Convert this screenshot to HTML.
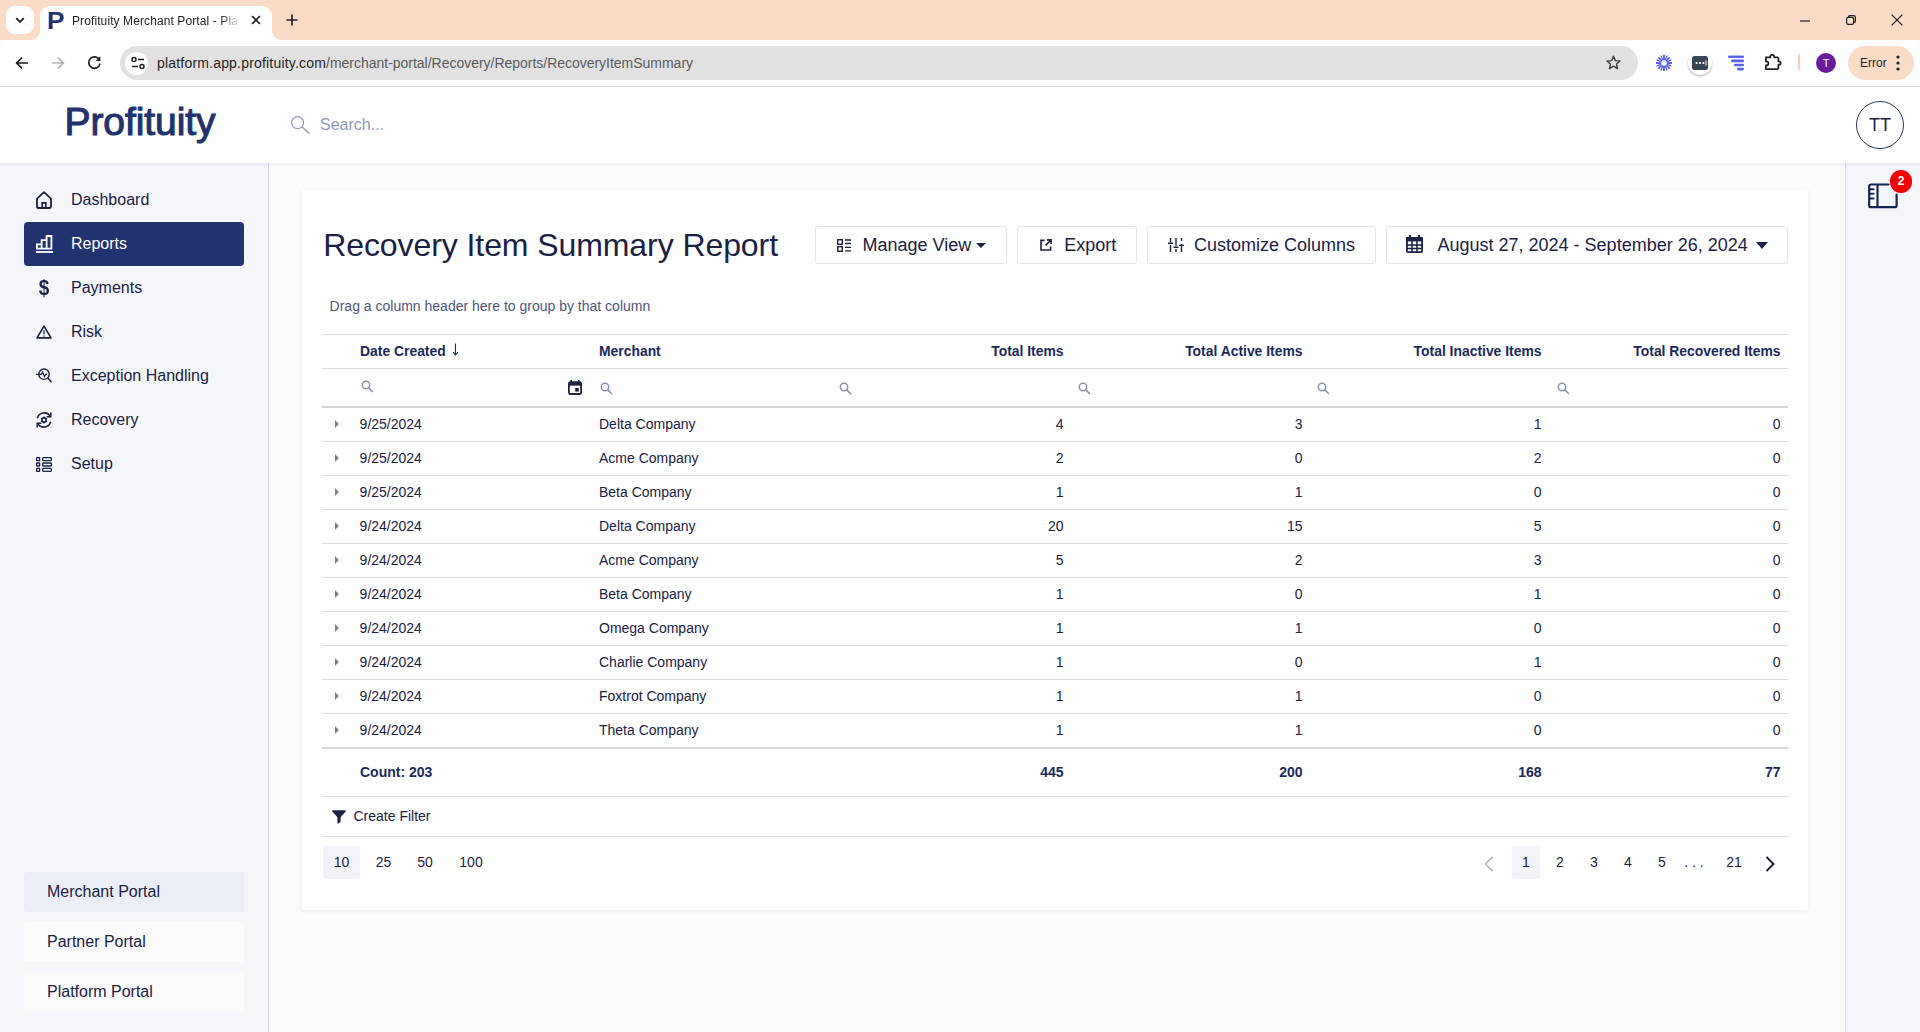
<!DOCTYPE html>
<html lang="en">
<head>
<meta charset="utf-8">
<title>Profituity Merchant Portal - Platform</title>
<style>
*{box-sizing:border-box;margin:0;padding:0}
html,body{width:1920px;height:1032px;overflow:hidden;background:#fbfbfc;font-family:"Liberation Sans",Arial,sans-serif;color:#1a2145}
.abs{position:absolute}
svg{display:block;overflow:visible}
/* ---------- browser chrome ---------- */
#tabbar{left:0;top:0;width:1920px;height:40px;background:#f9dbc8}
#tabdrop{left:6px;top:6px;width:28px;height:28px;border-radius:9px;background:#fff}
#tab{left:40px;top:6px;width:232px;height:34px;background:#fff;border-radius:10px 10px 0 0}
#tab:before,#tab:after{content:"";position:absolute;bottom:0;width:10px;height:10px}
#tab:before{left:-10px;background:radial-gradient(circle at 0 0,transparent 10px,#fff 10.5px)}
#tab:after{right:-10px;background:radial-gradient(circle at 100% 0,transparent 10px,#fff 10.5px)}
#tabtitle{left:72px;top:14px;font-size:12px;color:#1f1f1f;white-space:nowrap;width:168px;overflow:hidden;letter-spacing:.1px;-webkit-mask-image:linear-gradient(90deg,#000 148px,transparent 168px)}
#toolbar{left:0;top:40px;width:1920px;height:47px;background:#fff;border-bottom:1px solid #d9d9d9;border-radius:8px 8px 0 0}
#urlpill{left:120px;top:46px;width:1518px;height:34px;border-radius:17px;background:#e1e1e1}
#urlicon{left:125px;top:51.5px;width:23px;height:23px;border-radius:12px;background:#fff}
#url{left:157px;top:55px;font-size:14px;color:#1f1f1f;white-space:nowrap;letter-spacing:.19px}
#url span{color:#5a5a5a;letter-spacing:-.02px}
#errpill{left:1848px;top:46px;width:66px;height:34px;border-radius:17px;background:#f9dbc8}
#errtxt{left:1860px;top:56px;font-size:12px;color:#1f1f1f}
#avatar{left:1816px;top:53px;width:20px;height:20px;border-radius:10px;background:#6a1b9a;color:#fff;font-size:11px;text-align:center;line-height:20px}
#sepbar{left:1798px;top:54px;width:2px;height:16px;background:#f6cdb4;border-radius:1px}
/* ---------- app header ---------- */
#apphead{left:0;top:87px;width:1920px;height:76px;background:#fff;box-shadow:0 1px 4px rgba(40,50,100,.11)}
#logo{left:64.5px;top:99px;font-size:39px;font-weight:normal;letter-spacing:-.08px;color:#22326e;line-height:46px;-webkit-text-stroke:1.1px #22326e}
#search{left:320px;top:116px;font-size:16px;color:#8f97ba}
#tt{left:1856px;top:101px;width:48px;height:48px;border-radius:24px;border:1px solid #2a3364;font-size:18px;text-align:center;line-height:47px;color:#1a2145}
/* ---------- sidebar ---------- */
#side{left:0;top:163px;width:269px;height:869px;background:#f5f6fa;border-right:1px solid #d6daf0}
.nav{left:24px;width:220px;height:44px;border-radius:4px;font-size:16px;line-height:44px;padding-left:47px;color:#1a2145}
.nav.on{background:#21336f;color:#fff}
.portal{left:24px;width:220px;height:40px;border-radius:3px;font-size:16px;line-height:40px;padding-left:23px;background:#fbfbfc;color:#1a2145}
.portal.on{background:#eceef7}
#rside{left:1845px;top:163px;width:75px;height:869px;background:#f5f6fa;border-left:1px solid #d6daf0}
#badge{left:1890px;top:170px;width:22px;height:23px;border-radius:11px;background:#f20000;color:#fff;font-size:12px;font-weight:bold;text-align:center;line-height:23px}
/* ---------- card ---------- */
#card{left:302px;top:190px;width:1506px;height:720px;background:#fff;box-shadow:0 1px 4px rgba(40,50,100,.10)}
#title{left:323.2px;top:224px;font-size:32px;color:#1a2145;line-height:42px;white-space:nowrap;letter-spacing:-.08px}
.btn{top:226px;height:38px;border:1px solid #e2e4ee;border-radius:3px;background:#fff;font-size:18px;line-height:36px;color:#1a2145;white-space:nowrap}
.btn span{position:absolute;top:0}
#drag{left:329.6px;top:298px;font-size:14px;color:#4d5580}
.hl{left:322px;width:1466px;height:1px;background:#dedee0}
.hl2{left:322px;width:1466px;height:2px;background:#d5d5d7}
.th{top:344px;font-size:13.9px;font-weight:bold;color:#1a2a5e;white-space:nowrap;line-height:15px}
.r{text-align:right}
.td{font-size:14px;color:#1a2145;white-space:nowrap;line-height:16px}
.tf{top:764px;font-size:14px;font-weight:bold;color:#1a2a5e;white-space:nowrap;line-height:16px}
.exp{left:335px;width:0;height:0;border-left:4.6px solid #828390;border-top:4px solid transparent;border-bottom:4px solid transparent}
.pg{top:846px;height:32.6px;font-size:14px;line-height:32px;text-align:center;color:#1a2145;border-radius:3px}
.pg.on{background:#f3f4f9}
</style>
</head>
<body>
<!-- browser chrome -->
<div class="abs" id="tabbar"></div>
<div class="abs" id="tabdrop"><svg class="abs" style="left:9px;top:11px" width="10" height="7" viewBox="0 0 10 7"><path d="M1.2 1.2 L5 5 L8.8 1.2" fill="none" stroke="#1f1f1f" stroke-width="1.8"/></svg></div>
<div class="abs" id="toolbar"></div>
<div class="abs" id="tab"></div>
<div class="abs" style="left:47px;top:9px;font-size:23px;font-weight:bold;color:#22326e;line-height:24px;transform:scaleX(1.15);transform-origin:0 0">P</div>
<div class="abs" id="tabtitle">Profituity Merchant Portal - Platform</div>
<svg class="abs" style="left:251px;top:15px" width="10" height="10" viewBox="0 0 10 10"><path d="M1 1 L9 9 M9 1 L1 9" stroke="#1f1f1f" stroke-width="1.6" fill="none"/></svg>
<svg class="abs" style="left:286px;top:14px" width="12" height="12" viewBox="0 0 12 12"><path d="M6 0.5 V11.5 M0.5 6 H11.5" stroke="#1f1f1f" stroke-width="1.7" fill="none"/></svg>
<!-- window controls -->
<svg class="abs" style="left:1800px;top:19.5px" width="10" height="2" viewBox="0 0 10 2"><path d="M0 1 H10" stroke="#1f1f1f" stroke-width="1.2"/></svg>
<svg class="abs" style="left:1846px;top:15px" width="10" height="10" viewBox="0 0 10 10"><rect x="0.6" y="2.4" width="7" height="7" rx="1.6" fill="none" stroke="#1f1f1f" stroke-width="1.2"/><path d="M2.4 2.2 Q2.4 0.6 4 0.6 H7.6 Q9.4 0.6 9.4 2.4 V6 Q9.4 7.6 7.8 7.6" fill="none" stroke="#1f1f1f" stroke-width="1.2"/></svg>
<svg class="abs" style="left:1891px;top:14px" width="12" height="12" viewBox="0 0 12 12"><path d="M0.6 0.6 L11.4 11.4 M11.4 0.6 L0.6 11.4" stroke="#1f1f1f" stroke-width="1.3" fill="none"/></svg>
<!-- toolbar icons -->
<svg class="abs" style="left:15px;top:56px" width="14" height="14" viewBox="0 0 14 14"><path d="M13 7 H2 M7 1.6 L1.6 7 L7 12.4" fill="none" stroke="#1f1f1f" stroke-width="1.7"/></svg>
<svg class="abs" style="left:51px;top:56px" width="14" height="14" viewBox="0 0 14 14"><path d="M1 7 H12 M7 1.6 L12.4 7 L7 12.4" fill="none" stroke="#b5b5b5" stroke-width="1.7"/></svg>
<svg class="abs" style="left:87px;top:55px" width="15" height="15" viewBox="0 0 15 15"><path d="M12.6 5.2 A5.7 5.7 0 1 0 13 8.6" fill="none" stroke="#1f1f1f" stroke-width="1.7"/><path d="M13.4 1.2 V6 H8.6 Z" fill="#1f1f1f"/></svg>
<div class="abs" id="urlpill"></div>
<div class="abs" id="urlicon"></div>
<svg class="abs" style="left:130px;top:56px" width="16" height="14" viewBox="0 0 16 14"><circle cx="4" cy="3.5" r="2" fill="none" stroke="#1f1f1f" stroke-width="1.5"/><path d="M8 3.5 H14" stroke="#1f1f1f" stroke-width="1.5"/><circle cx="12" cy="10.5" r="2" fill="none" stroke="#1f1f1f" stroke-width="1.5"/><path d="M2 10.5 H8" stroke="#1f1f1f" stroke-width="1.5"/></svg>
<div class="abs" id="url">platform.app.profituity.com<span>/merchant-portal/Recovery/Reports/RecoveryItemSummary</span></div>
<svg class="abs" style="left:1605px;top:54px" width="17" height="17" viewBox="0 0 24 24"><path d="M12 3.2 L14.6 9.3 L21.2 9.9 L16.2 14.2 L17.7 20.7 L12 17.2 L6.3 20.7 L7.8 14.2 L2.8 9.9 L9.4 9.3 Z" fill="none" stroke="#3c3c3c" stroke-width="2" stroke-linejoin="round"/></svg>
<!-- extension icons -->
<svg class="abs" style="left:1656px;top:55px" width="16" height="16" viewBox="0 0 16 16"><g stroke="#5b63f0" stroke-width="1.9" stroke-linecap="butt"><path d="M8 0 V16 M0 8 H16 M2.3 2.3 L13.7 13.7 M13.7 2.3 L2.3 13.7"/><path d="M4.9 0.6 L11.1 15.4 M11.1 0.6 L4.9 15.4 M0.6 4.9 L15.4 11.1 M15.4 4.9 L0.6 11.1" stroke-width="1.2"/></g><circle cx="8" cy="8" r="2.8" fill="#fff"/></svg>
<div class="abs" style="left:1688px;top:51px;width:24px;height:24px;border-radius:12px;background:#fff;box-shadow:0 1px 2px rgba(0,0,0,.35)"></div>
<svg class="abs" style="left:1692px;top:56px" width="16" height="14" viewBox="0 0 16 14"><rect x="0" y="0" width="16" height="14" rx="2.5" fill="#3a4554"/><circle cx="4.6" cy="7" r="1.1" fill="#fff"/><circle cx="8" cy="7" r="1.1" fill="#fff"/><circle cx="11.4" cy="7" r="1.1" fill="#fff"/><path d="M14 4.5 V9.5" stroke="#fff" stroke-width="1"/></svg>
<svg class="abs" style="left:1728px;top:55px" width="16" height="16" viewBox="0 0 16 16"><g fill="#5a63e6"><rect x="0" y="0.5" width="16" height="2.6" rx="1.3"/><rect x="3" y="4.6" width="13" height="2.6" rx="1.3"/><rect x="6" y="8.7" width="10" height="2.6" rx="1.3"/><rect x="9" y="12.8" width="7" height="2.6" rx="1.3"/></g></svg>
<svg class="abs" style="left:1764px;top:53px" width="18" height="18" viewBox="0 0 18 18"><path d="M1.9 4.4 H6.3 V3.7 A1.9 1.9 0 0 1 10.1 3.7 V4.4 H13.2 Q14.4 4.4 14.4 5.6 V8.3 H15 A1.7 1.7 0 0 1 15 11.7 H14.4 V15 Q14.4 16.2 13.2 16.2 H1.9 V12.4 H2.4 A2 2 0 0 0 2.4 8.4 H1.9 Z" fill="none" stroke="#1f1f1f" stroke-width="1.7" stroke-linejoin="round"/></svg>
<div class="abs" id="sepbar"></div>
<div class="abs" id="avatar">T</div>
<div class="abs" id="errpill"></div>
<div class="abs" id="errtxt">Error</div>
<svg class="abs" style="left:1896px;top:55px" width="4" height="16" viewBox="0 0 4 16"><circle cx="2" cy="2" r="1.6" fill="#1f1f1f"/><circle cx="2" cy="8" r="1.6" fill="#1f1f1f"/><circle cx="2" cy="14" r="1.6" fill="#1f1f1f"/></svg>

<!-- app header -->
<div class="abs" id="side"></div>
<div class="abs" id="rside"></div>
<div class="abs" id="apphead"></div>
<div class="abs" id="logo">Profituity</div>
<svg class="abs" style="left:290px;top:115px" width="20" height="20" viewBox="0 0 20 20"><circle cx="7.6" cy="7.6" r="6" fill="none" stroke="#8f97ba" stroke-width="1.3"/><path d="M12 12 L19.4 18.6" stroke="#8f97ba" stroke-width="1.4"/></svg>
<div class="abs" id="search">Search...</div>
<div class="abs" id="tt">TT</div>

<!-- sidebar nav -->
<div class="abs nav" style="top:178px">Dashboard</div>
<div class="abs nav on" style="top:222px">Reports</div>
<div class="abs nav" style="top:266px">Payments</div>
<div class="abs nav" style="top:310px">Risk</div>
<div class="abs nav" style="top:354px">Exception Handling</div>
<div class="abs nav" style="top:398px">Recovery</div>
<div class="abs nav" style="top:442px">Setup</div>
<div class="abs portal on" style="top:872px">Merchant Portal</div>
<div class="abs portal" style="top:922px">Partner Portal</div>
<div class="abs portal" style="top:972px">Platform Portal</div>

<!-- navicons -->
<svg class="abs" style="left:36px;top:191px" width="16" height="18" viewBox="0 0 16 18"><path d="M1 7.6 L8 1.2 L15 7.6 V15.6 Q15 17 13.6 17 H2.4 Q1 17 1 15.6 Z" fill="none" stroke="#1a2145" stroke-width="1.8" stroke-linejoin="round"/><path d="M6.2 17 V11.8 H9.8 V17" fill="none" stroke="#1a2145" stroke-width="1.7"/></svg>
<svg class="abs" style="left:36px;top:235px" width="17" height="18" viewBox="0 0 17 18"><path d="M0 17 H17" stroke="#fff" stroke-width="1.8"/><path d="M0.9 13.6 V9.4 H5.6 M5.6 13.6 V5.2 H10.6 M10.6 13.6 V1 H15.4 V13.6 M0 13.6 H16.3" fill="none" stroke="#fff" stroke-width="1.8"/></svg>
<div class="abs" style="left:36px;top:276px;width:16px;text-align:center;font-size:21.5px;font-weight:bold;line-height:24px;color:#1a2145;transform:scaleX(.88)">$</div>
<svg class="abs" style="left:36px;top:325px" width="16" height="14" viewBox="0 0 16 14"><path d="M8 1.2 L15 12.9 H1 Z" fill="none" stroke="#1a2145" stroke-width="1.6" stroke-linejoin="round"/><path d="M8 5.2 V9.2 M8 10.4 V11.6" stroke="#1a2145" stroke-width="1.3"/></svg>
<svg class="abs" style="left:36px;top:368px" width="16" height="15" viewBox="0 0 16 15"><circle cx="8" cy="6.2" r="5.2" fill="none" stroke="#1a2145" stroke-width="1.4"/><path d="M11.8 10 L15.6 14.2" stroke="#1a2145" stroke-width="1.6"/><path d="M0 6.4 H5.4 L6.6 4 L8.4 8.6 L9.6 6.4 H11" fill="none" stroke="#1a2145" stroke-width="1.2"/></svg>
<svg class="abs" style="left:36px;top:412px" width="16" height="16" viewBox="0 0 16 16"><path d="M1.4 6.2 A7 7 0 0 1 14 4 M14.6 9.8 A7 7 0 0 1 2 12" fill="none" stroke="#1a2145" stroke-width="1.5"/><path d="M14.8 0.6 V4.8 H10.6 M1.2 15.4 V11.2 H5.4" fill="none" stroke="#1a2145" stroke-width="1.5"/><circle cx="8" cy="8" r="2.1" fill="none" stroke="#1a2145" stroke-width="1.6"/><path d="M8 4.6 V5.6 M8 10.4 V11.4 M5 6.3 L5.9 6.8 M10.1 9.2 L11 9.7 M5 9.7 L5.9 9.2 M10.1 6.8 L11 6.3" stroke="#1a2145" stroke-width="1.4"/></svg>
<svg class="abs" style="left:36px;top:457px" width="16" height="15" viewBox="0 0 16 15"><g fill="none" stroke="#1a2145" stroke-width="1.3"><rect x="0.65" y="0.65" width="3" height="3" rx="0.4"/><rect x="0.65" y="6" width="3" height="3" rx="0.4"/><rect x="0.65" y="11.35" width="3" height="3" rx="0.4"/><rect x="6.65" y="0.65" width="8.7" height="3" rx="0.8"/><rect x="6.65" y="6" width="8.7" height="3" rx="0.8"/><rect x="6.65" y="11.35" width="8.7" height="3" rx="0.8"/></g></svg>
<svg class="abs" style="left:1868px;top:183px" width="30" height="26" viewBox="0 0 30 26"><rect x="1.5" y="1.5" width="8" height="22" fill="#fff"/><path d="M20.5 1.5 H3 Q1.2 1.5 1.2 3.3 V22.4 Q1.2 24.2 3 24.2 H26.8 Q28.6 24.2 28.6 22.4 V11.5" fill="none" stroke="#142553" stroke-width="2.2" stroke-linecap="round"/><path d="M9.5 1.5 V24" stroke="#142553" stroke-width="2.2"/><path d="M2 6.2 H5.6 M2 10.8 H5.6 M2 15.4 H5.6" stroke="#142553" stroke-width="2" stroke-linecap="round"/></svg>
<!-- /navicons -->
<!-- right rail -->
<div class="abs" id="badge">2</div>

<!-- card -->
<div class="abs" id="card"></div>
<div class="abs" id="title">Recovery Item Summary Report</div>
<!-- buttons -->
<div class="abs btn" style="left:815px;width:192px"><span style="left:46.5px">Manage View</span></div>
<svg class="abs" style="left:837px;top:239px" width="14" height="13" viewBox="0 0 14 13"><rect x="0.7" y="0.7" width="4.6" height="4.6" fill="none" stroke="#1a2145" stroke-width="1.4"/><rect x="0.7" y="7.7" width="4.6" height="4.6" fill="none" stroke="#1a2145" stroke-width="1.4"/><path d="M8 1 H14 M8 4.5 H14 M8 8.3 H14 M8 11.8 H14" stroke="#1a2145" stroke-width="1.3"/></svg>
<svg class="abs" style="left:976px;top:243px" width="10" height="5" viewBox="0 0 10 5"><path d="M0 0 H10 L5 5 Z" fill="#1a2145"/></svg>
<div class="abs btn" style="left:1017px;width:120px"><span style="left:46.3px">Export</span></div>
<svg class="abs" style="left:1040px;top:239px" width="12" height="12" viewBox="0 0 12 12"><path d="M4.5 1.4 H1 V11 H10.6 V7.5" fill="none" stroke="#1a2145" stroke-width="1.6"/><path d="M7 0.9 H11.1 V5 M11 1 L5.6 6.4" fill="none" stroke="#1a2145" stroke-width="1.6"/></svg>
<div class="abs btn" style="left:1147px;width:229px"><span style="left:46px">Customize Columns</span></div>
<svg class="abs" style="left:1168px;top:238px" width="16" height="14" viewBox="0 0 16 14"><path d="M2.5 0 V4 M2.5 7 V14 M8 0 V8 M8 11 V14 M13.5 0 V3 M13.5 6 V14" stroke="#1a2145" stroke-width="1.4"/><path d="M0 5.2 H5 M5.5 9.2 H10.5 M11 7.4 H16" stroke="#1a2145" stroke-width="1.4"/></svg>
<div class="abs btn" style="left:1386px;width:402px"><span style="left:50.5px">August 27, 2024 - September 26, 2024</span></div>
<svg class="abs" style="left:1406px;top:235px" width="17" height="18" viewBox="0 0 17 18"><path d="M4 0 V3 M13 0 V3" stroke="#1a2145" stroke-width="2.2"/><rect x="0" y="2.2" width="17" height="4.2" fill="#1a2145"/><rect x="0.9" y="3" width="15.2" height="14.1" rx="1" fill="none" stroke="#1a2145" stroke-width="1.8"/><path d="M1 10 H16 M1 13.6 H16 M6 6 V17 M11 6 V17" stroke="#1a2145" stroke-width="1.5"/></svg>
<svg class="abs" style="left:1756px;top:242px" width="12" height="7" viewBox="0 0 12 7"><path d="M0 0 H12 L6 7 Z" fill="#1a2145"/></svg>
<!-- /buttons -->
<div class="abs" id="drag">Drag a column header here to group by that column</div>
<!-- table -->
<div class="abs hl" style="top:334px"></div>
<div class="abs hl" style="top:368px"></div>
<div class="abs hl2" style="top:406px"></div>
<div class="abs th" style="left:360px">Date Created</div>
<svg class="abs" style="left:452px;top:343px" width="7" height="13" viewBox="0 0 7 13"><path d="M3.5 0.5 V11.5 M1.2 9.2 L3.5 11.8 L5.8 9.2" fill="none" stroke="#1a2a5e" stroke-width="1.1"/></svg>
<div class="abs th" style="left:599px">Merchant</div>
<div class="abs th r" style="left:833.5px;width:230px">Total Items</div>
<div class="abs th r" style="left:1072.5px;width:230px">Total Active Items</div>
<div class="abs th r" style="left:1311.5px;width:230px">Total Inactive Items</div>
<div class="abs th r" style="left:1550.5px;width:230px">Total Recovered Items</div>
<svg class="abs" style="left:361px;top:380px" width="13" height="13" viewBox="0 0 13 13"><circle cx="5" cy="5" r="3.7" fill="none" stroke="#8a90b0" stroke-width="1.5"/><path d="M7.8 7.8 L12 12" stroke="#8a90b0" stroke-width="1.7"/></svg>
<svg class="abs" style="left:600px;top:382px" width="13" height="13" viewBox="0 0 13 13"><circle cx="5" cy="5" r="3.7" fill="none" stroke="#8a90b0" stroke-width="1.5"/><path d="M7.8 7.8 L12 12" stroke="#8a90b0" stroke-width="1.7"/></svg>
<svg class="abs" style="left:839px;top:382px" width="13" height="13" viewBox="0 0 13 13"><circle cx="5" cy="5" r="3.7" fill="none" stroke="#8a90b0" stroke-width="1.5"/><path d="M7.8 7.8 L12 12" stroke="#8a90b0" stroke-width="1.7"/></svg>
<svg class="abs" style="left:1078px;top:382px" width="13" height="13" viewBox="0 0 13 13"><circle cx="5" cy="5" r="3.7" fill="none" stroke="#8a90b0" stroke-width="1.5"/><path d="M7.8 7.8 L12 12" stroke="#8a90b0" stroke-width="1.7"/></svg>
<svg class="abs" style="left:1317px;top:382px" width="13" height="13" viewBox="0 0 13 13"><circle cx="5" cy="5" r="3.7" fill="none" stroke="#8a90b0" stroke-width="1.5"/><path d="M7.8 7.8 L12 12" stroke="#8a90b0" stroke-width="1.7"/></svg>
<svg class="abs" style="left:1557px;top:382px" width="13" height="13" viewBox="0 0 13 13"><circle cx="5" cy="5" r="3.7" fill="none" stroke="#8a90b0" stroke-width="1.5"/><path d="M7.8 7.8 L12 12" stroke="#8a90b0" stroke-width="1.7"/></svg>
<svg class="abs" style="left:568px;top:380px" width="14" height="15" viewBox="0 0 14 15"><path d="M3.2 0 V2 M10.8 0 V2" stroke="#1a2145" stroke-width="1.6"/><rect x="0.9" y="2.2" width="12.2" height="11.8" rx="1.4" fill="none" stroke="#1a2145" stroke-width="1.8"/><rect x="0.9" y="2.2" width="12.2" height="3.4" fill="#1a2145"/><rect x="7.2" y="8" width="3.6" height="3.6" fill="#1a2145"/></svg>
<div class="abs exp" style="top:420px"></div>
<div class="abs td" style="left:359.6px;top:416px">9/25/2024</div>
<div class="abs td" style="left:599px;top:416px">Delta Company</div>
<div class="abs td r" style="left:963.5px;width:100px;top:416px">4</div>
<div class="abs td r" style="left:1202.5px;width:100px;top:416px">3</div>
<div class="abs td r" style="left:1441.5px;width:100px;top:416px">1</div>
<div class="abs td r" style="left:1680.5px;width:100px;top:416px">0</div>
<div class="abs hl" style="top:441px"></div>
<div class="abs exp" style="top:454px"></div>
<div class="abs td" style="left:359.6px;top:450px">9/25/2024</div>
<div class="abs td" style="left:599px;top:450px">Acme Company</div>
<div class="abs td r" style="left:963.5px;width:100px;top:450px">2</div>
<div class="abs td r" style="left:1202.5px;width:100px;top:450px">0</div>
<div class="abs td r" style="left:1441.5px;width:100px;top:450px">2</div>
<div class="abs td r" style="left:1680.5px;width:100px;top:450px">0</div>
<div class="abs hl" style="top:475px"></div>
<div class="abs exp" style="top:488px"></div>
<div class="abs td" style="left:359.6px;top:484px">9/25/2024</div>
<div class="abs td" style="left:599px;top:484px">Beta Company</div>
<div class="abs td r" style="left:963.5px;width:100px;top:484px">1</div>
<div class="abs td r" style="left:1202.5px;width:100px;top:484px">1</div>
<div class="abs td r" style="left:1441.5px;width:100px;top:484px">0</div>
<div class="abs td r" style="left:1680.5px;width:100px;top:484px">0</div>
<div class="abs hl" style="top:509px"></div>
<div class="abs exp" style="top:522px"></div>
<div class="abs td" style="left:359.6px;top:518px">9/24/2024</div>
<div class="abs td" style="left:599px;top:518px">Delta Company</div>
<div class="abs td r" style="left:963.5px;width:100px;top:518px">20</div>
<div class="abs td r" style="left:1202.5px;width:100px;top:518px">15</div>
<div class="abs td r" style="left:1441.5px;width:100px;top:518px">5</div>
<div class="abs td r" style="left:1680.5px;width:100px;top:518px">0</div>
<div class="abs hl" style="top:543px"></div>
<div class="abs exp" style="top:556px"></div>
<div class="abs td" style="left:359.6px;top:552px">9/24/2024</div>
<div class="abs td" style="left:599px;top:552px">Acme Company</div>
<div class="abs td r" style="left:963.5px;width:100px;top:552px">5</div>
<div class="abs td r" style="left:1202.5px;width:100px;top:552px">2</div>
<div class="abs td r" style="left:1441.5px;width:100px;top:552px">3</div>
<div class="abs td r" style="left:1680.5px;width:100px;top:552px">0</div>
<div class="abs hl" style="top:577px"></div>
<div class="abs exp" style="top:590px"></div>
<div class="abs td" style="left:359.6px;top:586px">9/24/2024</div>
<div class="abs td" style="left:599px;top:586px">Beta Company</div>
<div class="abs td r" style="left:963.5px;width:100px;top:586px">1</div>
<div class="abs td r" style="left:1202.5px;width:100px;top:586px">0</div>
<div class="abs td r" style="left:1441.5px;width:100px;top:586px">1</div>
<div class="abs td r" style="left:1680.5px;width:100px;top:586px">0</div>
<div class="abs hl" style="top:611px"></div>
<div class="abs exp" style="top:624px"></div>
<div class="abs td" style="left:359.6px;top:620px">9/24/2024</div>
<div class="abs td" style="left:599px;top:620px">Omega Company</div>
<div class="abs td r" style="left:963.5px;width:100px;top:620px">1</div>
<div class="abs td r" style="left:1202.5px;width:100px;top:620px">1</div>
<div class="abs td r" style="left:1441.5px;width:100px;top:620px">0</div>
<div class="abs td r" style="left:1680.5px;width:100px;top:620px">0</div>
<div class="abs hl" style="top:645px"></div>
<div class="abs exp" style="top:658px"></div>
<div class="abs td" style="left:359.6px;top:654px">9/24/2024</div>
<div class="abs td" style="left:599px;top:654px">Charlie Company</div>
<div class="abs td r" style="left:963.5px;width:100px;top:654px">1</div>
<div class="abs td r" style="left:1202.5px;width:100px;top:654px">0</div>
<div class="abs td r" style="left:1441.5px;width:100px;top:654px">1</div>
<div class="abs td r" style="left:1680.5px;width:100px;top:654px">0</div>
<div class="abs hl" style="top:679px"></div>
<div class="abs exp" style="top:692px"></div>
<div class="abs td" style="left:359.6px;top:688px">9/24/2024</div>
<div class="abs td" style="left:599px;top:688px">Foxtrot Company</div>
<div class="abs td r" style="left:963.5px;width:100px;top:688px">1</div>
<div class="abs td r" style="left:1202.5px;width:100px;top:688px">1</div>
<div class="abs td r" style="left:1441.5px;width:100px;top:688px">0</div>
<div class="abs td r" style="left:1680.5px;width:100px;top:688px">0</div>
<div class="abs hl" style="top:713px"></div>
<div class="abs exp" style="top:726px"></div>
<div class="abs td" style="left:359.6px;top:722px">9/24/2024</div>
<div class="abs td" style="left:599px;top:722px">Theta Company</div>
<div class="abs td r" style="left:963.5px;width:100px;top:722px">1</div>
<div class="abs td r" style="left:1202.5px;width:100px;top:722px">1</div>
<div class="abs td r" style="left:1441.5px;width:100px;top:722px">0</div>
<div class="abs td r" style="left:1680.5px;width:100px;top:722px">0</div>
<div class="abs hl2" style="top:747px"></div>
<div class="abs tf" style="left:360px">Count: 203</div>
<div class="abs tf r" style="left:963.5px;width:100px">445</div>
<div class="abs tf r" style="left:1202.5px;width:100px">200</div>
<div class="abs tf r" style="left:1441.5px;width:100px">168</div>
<div class="abs tf r" style="left:1680.5px;width:100px">77</div>
<div class="abs hl" style="top:796px"></div>
<svg class="abs" style="left:332px;top:810px" width="14" height="14" viewBox="0 0 14 14"><path d="M0.3 0.3 H13.7 V1.6 L8.6 7.2 V12 L5.4 13.7 V7.2 L0.3 1.6 Z" fill="#1a2145"/></svg>
<div class="abs td" style="left:353.5px;top:808px">Create Filter</div>
<div class="abs hl" style="top:836px"></div>
<div class="abs pg on" style="left:323px;width:37px">10</div>
<div class="abs pg" style="left:364.5px;width:38px">25</div>
<div class="abs pg" style="left:406px;width:38px">50</div>
<div class="abs pg" style="left:448px;width:46px">100</div>
<svg class="abs" style="left:1484px;top:855.8px" width="10" height="16" viewBox="0 0 10 16"><path d="M8.7 0.8 L1.5 8 L8.7 15.2" fill="none" stroke="#b4b7c8" stroke-width="1.7"/></svg>
<div class="abs pg on" style="left:1512px;width:28px">1</div>
<div class="abs pg" style="left:1546px;width:28px">2</div>
<div class="abs pg" style="left:1580px;width:28px">3</div>
<div class="abs pg" style="left:1614px;width:28px">4</div>
<div class="abs pg" style="left:1648px;width:28px">5</div>
<div class="abs pg" style="left:1680px;width:28px">. . .</div>
<div class="abs pg" style="left:1716px;width:36px">21</div>
<svg class="abs" style="left:1765px;top:855.8px" width="10" height="16" viewBox="0 0 10 16"><path d="M1.5 1 L8.5 8 L1.5 15" fill="none" stroke="#1a2145" stroke-width="2"/></svg>
<!-- /table -->
</body>
</html>
